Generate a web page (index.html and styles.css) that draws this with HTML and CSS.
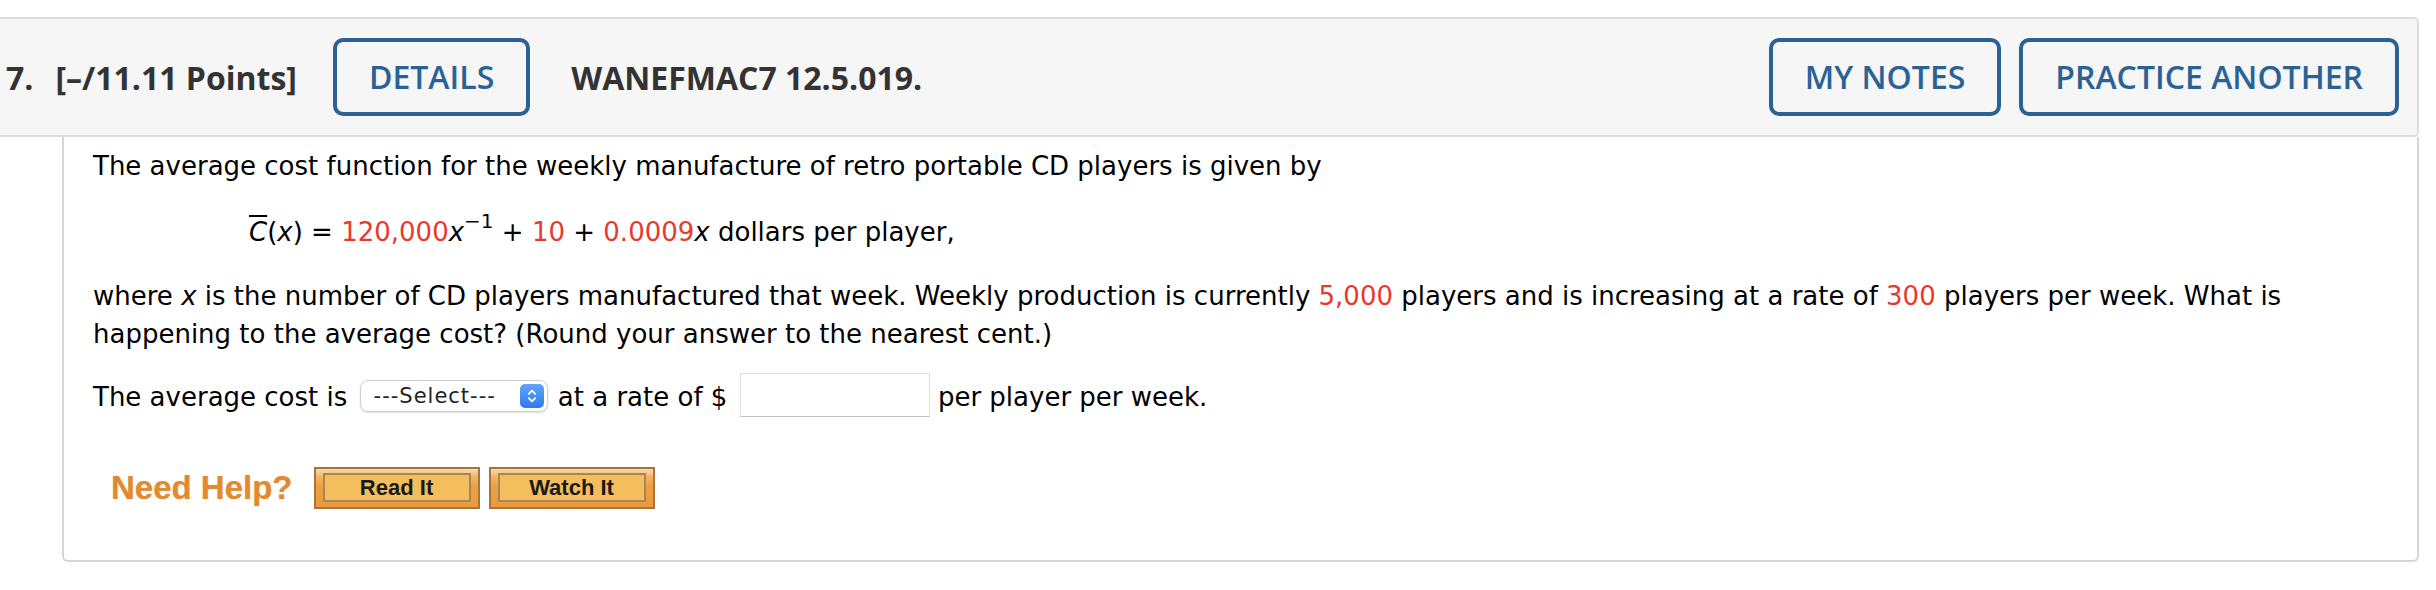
FILE: index.html
```html
<!DOCTYPE html>
<html lang="en">
<head>
<meta charset="utf-8">
<title>Question 7</title>
<link rel="stylesheet" href="styles.css">
</head>
<body>
<div class="question">
  <div class="q-header">
    <span class="q-num">7.</span>
    <span class="q-points">[–/11.11 Points]</span>
    <button class="q-btn q-details" type="button">DETAILS</button>
    <span class="q-title">WANEFMAC7 12.5.019.</span>
    <span class="q-spacer"></span>
    <button class="q-btn q-notes" type="button">MY NOTES</button>
    <button class="q-btn" type="button">PRACTICE ANOTHER</button>
  </div>
  <div class="q-body">
    <p class="p1">The average cost function for the weekly manufacture of retro portable CD players is given by</p>
    <p class="formula"><i class="cbar">C</i>(<i>x</i>) = <span class="red">120,000</span><i>x</i><sup class="sup">−1</sup> + <span class="red">10</span> + <span class="red">0.0009</span><i>x</i> dollars per player,</p>
    <p class="p3">where <i>x</i> is the number of CD players manufactured that week. Weekly production is currently <span class="red">5,000</span> players and is increasing at a rate of <span class="red">300</span> players per week. What is happening to the average cost? (Round your answer to the nearest cent.)</p>
    <p class="p4">The average cost is <span class="select"><span class="select-text">---Select---</span><svg class="stepper" width="24" height="24" viewBox="0 0 24 24"><defs><linearGradient id="stg" x1="0" y1="0" x2="0" y2="1"><stop offset="0" stop-color="#62a3fa"/><stop offset="1" stop-color="#2f7bf0"/></linearGradient></defs><rect width="24" height="24" rx="5" fill="url(#stg)"/><path d="M8.8 9.8 L12 6.6 L15.2 9.8" stroke="#fff" stroke-width="1.8" fill="none" stroke-linecap="round" stroke-linejoin="round"/><path d="M8.8 14.2 L12 17.4 L15.2 14.2" stroke="#fff" stroke-width="1.8" fill="none" stroke-linecap="round" stroke-linejoin="round"/></svg></span> at a rate of $ <span class="answer"></span> per player per week.</p>
    <div class="help">
      <span class="help-label">Need Help?</span>
      <span class="help-btn"><span class="help-inner">Read It</span></span>
      <span class="help-btn help-watch"><span class="help-inner">Watch It</span></span>
    </div>
  </div>
</div>
</body>
</html>
```

FILE: styles.css
```css
html, body {
  margin: 0;
  padding: 0;
  background: #ffffff;
}

.question {
  margin: 17px 17px 0 0;
}

.q-header {
  display: flex;
  align-items: center;
  height: 116px;
  background: #f6f6f6;
  border: 2px solid #dddddd;
  border-left: 0;
  border-radius: 0 5px 5px 0;
  padding: 0 18px 0 6px;
  font-family: "Open Sans", "Noto Sans", sans-serif;
  color: #333333;
}

.q-num {
  font-size: 32px;
  font-weight: 700;
  margin-right: 22px;
}

.q-points {
  font-size: 32px;
  font-weight: 700;
  margin-right: 36px;
}

.q-title {
  font-size: 32px;
  font-weight: 700;
}

.q-spacer {
  flex: 1;
}

.q-btn {
  height: 78px;
  padding: 0 32px;
  border: 4px solid #2b6296;
  border-radius: 10px;
  background: transparent;
  color: #2b6296;
  font-family: "Open Sans", "Noto Sans", sans-serif;
  font-size: 32px;
  font-weight: 600;
  line-height: 1;
}

.q-details {
  margin-right: 41px;
}

.q-notes {
  margin-right: 18px;
}

.q-body {
  margin-left: 62px;
  border: 2px solid #d6d6d6;
  border-top: 0;
  border-radius: 0 0 6px 6px;
  padding: 10px 28px 51px 29px;
  font-family: "DejaVu Sans", Verdana, sans-serif;
  font-size: 26px;
  line-height: 38px;
  color: #000000;
}

.q-body p {
  margin: 0;
}

.red {
  color: #e8392d;
}

.q-body .formula {
  margin-top: 28px;
  padding-left: 156px;
}

.cbar {
  text-decoration: overline;
}

.sup {
  font-size: 20px;
  line-height: 0;
  vertical-align: 13px;
}

.q-body .p3 {
  margin-top: 26px;
}

.q-body .p4 {
  margin-top: 20px;
}

.select {
  display: inline-flex;
  align-items: center;
  justify-content: space-between;
  box-sizing: border-box;
  width: 188px;
  height: 32px;
  margin: 0 2px 0 4px;
  padding: 0 3px 0 13px;
  border: 1px solid #d0d0d0;
  border-radius: 8px;
  background: #ffffff;
  box-shadow: 0 1px 2px rgba(0, 0, 0, 0.12);
  vertical-align: 3px;
}

.select-text {
  font-size: 21px;
  line-height: 30px;
  letter-spacing: 1px;
  color: #222222;
}

.stepper {
  display: block;
}

.answer {
  display: inline-block;
  box-sizing: border-box;
  width: 190px;
  height: 44px;
  margin-left: 4px;
  border: 1px solid #e0e0e0;
  border-bottom-color: #c4c4c4;
  background: #ffffff;
  vertical-align: -11px;
}

.help {
  display: flex;
  align-items: center;
  margin-top: 50px;
  height: 42px;
  padding-left: 18px;
}

.help-label {
  font-family: "Liberation Sans", Arial, sans-serif;
  font-size: 33px;
  font-weight: 700;
  color: #e38a30;
  text-shadow: 0 0 1px rgba(227, 138, 48, 0.6);
  margin-right: 21px;
}

.help-btn {
  display: flex;
  box-sizing: border-box;
  width: 166px;
  height: 42px;
  padding: 4px 7px 5px;
  border: 2px solid #a8743e;
  background: linear-gradient(#f8dcae 0, #f1b35f 22%, #eda043 45%, #e99a3c 100%);
}

.help-watch {
  margin-left: 9px;
}

.help-inner {
  flex: 1;
  display: flex;
  align-items: center;
  justify-content: center;
  border: 2px solid #a88658;
  background: #f3be5b;
  font-family: "Liberation Sans", Arial, sans-serif;
  font-size: 22px;
  font-weight: 700;
  color: #1a1a1a;
}
```
